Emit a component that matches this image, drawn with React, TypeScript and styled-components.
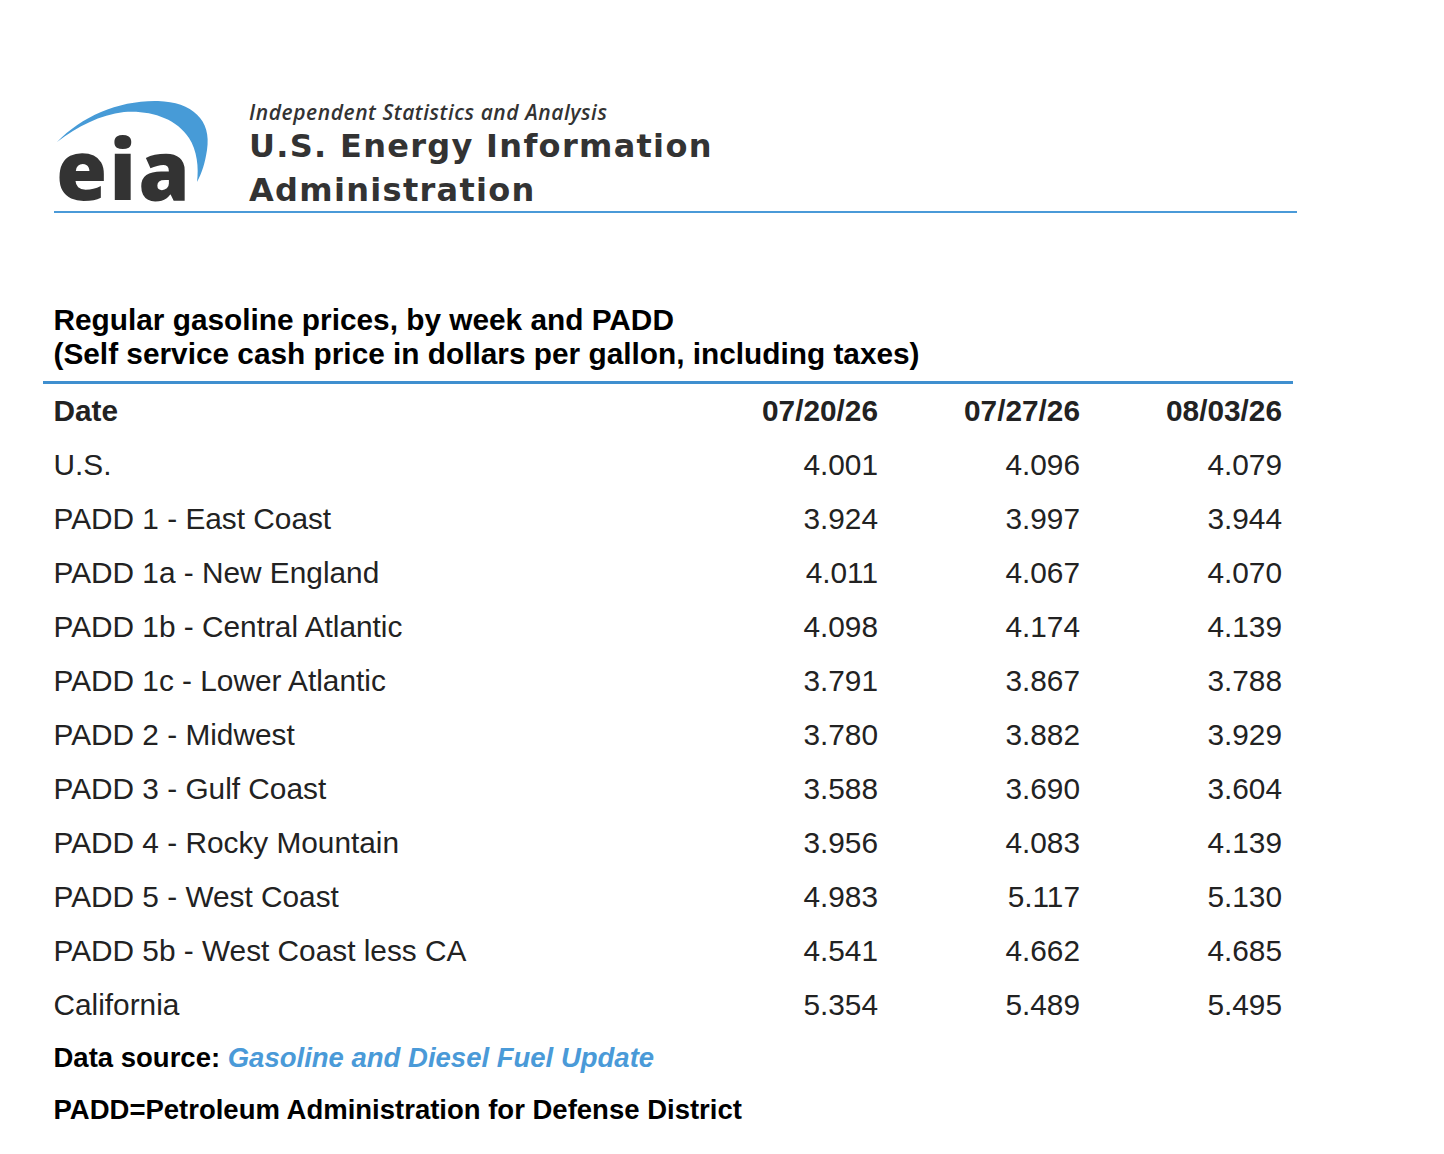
import React from "react";
import styled, { createGlobalStyle } from "styled-components";

const Global = createGlobalStyle`
  html, body { margin: 0; padding: 0; background: #ffffff; }
  body { font-family: "Liberation Sans", Arial, sans-serif; color: #222; }
`;

const Page = styled.div`
  padding: 95px 0 40px 43px;
`;

const Masthead = styled.header`
  display: flex;
  align-items: flex-start;
  margin-left: 11px;
  width: 1243px;
  height: 116px;
  border-bottom: 2px solid #4a9ad8;
`;

const Mark = styled.svg`
  display: block;
  flex: none;
  overflow: visible;
`;

const Wordmark = styled.div`
  display: flex;
  flex-direction: column;
  margin-left: 34px;
  padding-top: 5px;
  color: #333;
`;

const Tagline = styled.div`
  font-family: "Open Sans", "Liberation Sans", sans-serif;
  font-size: 21px;
  line-height: 24px;
  font-style: italic;
  font-weight: 600;
  letter-spacing: 0.55px;
`;

const AgencyLine = styled.div`
  font-family: "DejaVu Sans", "Open Sans", sans-serif;
  font-size: 32px;
  line-height: 44px;
  font-weight: 700;
  letter-spacing: 1.3px;
`;

const Table = styled.table`
  margin-top: 90px;
  width: 1250px;
  border-collapse: collapse;
  font-size: 29.8px;
  color: #222;
`;

const Caption = styled.caption`
  text-align: left;
  padding: 0 11px 10px 10.5px;
  font-weight: 700;
  line-height: 34px;
  color: #000;
`;

const HeadCell = styled.th<{ $num?: boolean }>`
  height: 54px;
  padding: 0 11px 0 10.5px;
  border-top: 3px solid #3f8fcf;
  font-weight: 700;
  text-align: ${(p) => (p.$num ? "right" : "left")};
  width: ${(p) => (p.$num ? "180.5px" : "auto")};
  vertical-align: middle;
`;

const Cell = styled.td<{ $num?: boolean }>`
  height: 54px;
  padding: 0 11px 0 10.5px;
  text-align: ${(p) => (p.$num ? "right" : "left")};
  vertical-align: middle;
`;

const Note = styled.p`
  margin: 0;
  padding-left: 10.5px;
  font-size: 27.5px;
  font-weight: 700;
  line-height: 52px;
  color: #000;
`;

const SourceLink = styled.a`
  color: #4a9ad8;
  font-style: italic;
  text-decoration: none;
`;

const rows: [string, string, string, string][] = [
  ["U.S.", "4.001", "4.096", "4.079"],
  ["PADD 1 - East Coast", "3.924", "3.997", "3.944"],
  ["PADD 1a - New England", "4.011", "4.067", "4.070"],
  ["PADD 1b - Central Atlantic", "4.098", "4.174", "4.139"],
  ["PADD 1c - Lower Atlantic", "3.791", "3.867", "3.788"],
  ["PADD 2 - Midwest", "3.780", "3.882", "3.929"],
  ["PADD 3 - Gulf Coast", "3.588", "3.690", "3.604"],
  ["PADD 4 - Rocky Mountain", "3.956", "4.083", "4.139"],
  ["PADD 5 - West Coast", "4.983", "5.117", "5.130"],
  ["PADD 5b - West Coast less CA", "4.541", "4.662", "4.685"],
  ["California", "5.354", "5.489", "5.495"],
];

const EiaMark = () => (
  <Mark width="161" height="116" viewBox="54 95 161 116">
    <path
      d="M57,142 C82,116 120,100 158,101 C192,102 212,120 207,150 C205,163 202,173 197,182 C199,168 197,150 189,138 C176,118 150,110 124,112 C100,115 78,126 57,142 Z"
      fill="#479bd7"
    />
    <text
      x="56"
      y="200"
      fontFamily="'Open Sans', 'Liberation Sans', sans-serif"
      fontWeight="800"
      fontSize="83"
      fill="#333"
      letterSpacing="2"
    >
      eia
    </text>
  </Mark>
);

export default function App() {
  return (
    <>
      <Global />
      <Page>
        <Masthead>
          <EiaMark />
          <Wordmark>
            <Tagline>Independent Statistics and Analysis</Tagline>
            <AgencyLine>U.S. Energy Information</AgencyLine>
            <AgencyLine>Administration</AgencyLine>
          </Wordmark>
        </Masthead>
        <Table>
          <Caption>
            Regular gasoline prices, by week and PADD
            <br />
            (Self service cash price in dollars per gallon, including taxes)
          </Caption>
          <thead>
            <tr>
              <HeadCell>Date</HeadCell>
              <HeadCell $num>07/20/26</HeadCell>
              <HeadCell $num>07/27/26</HeadCell>
              <HeadCell $num>08/03/26</HeadCell>
            </tr>
          </thead>
          <tbody>
            {rows.map((r) => (
              <tr key={r[0]}>
                <Cell>{r[0]}</Cell>
                <Cell $num>{r[1]}</Cell>
                <Cell $num>{r[2]}</Cell>
                <Cell $num>{r[3]}</Cell>
              </tr>
            ))}
          </tbody>
        </Table>
        <Note>
          Data source: <SourceLink href="#">Gasoline and Diesel Fuel Update</SourceLink>
        </Note>
        <Note>PADD=Petroleum Administration for Defense District</Note>
      </Page>
    </>
  );
}
